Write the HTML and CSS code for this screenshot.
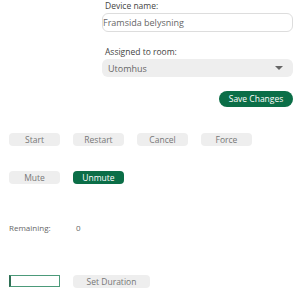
FILE: index.html
```html
<!DOCTYPE html>
<html lang="en">
<head>
  <meta charset="UTF-8">
  <title>Device settings</title>
  <link rel="stylesheet" href="styles.css">
</head>
<body>
  <div class="settings">
    <label class="field-label" for="deviceName">Device name:</label>
    <input type="text" id="deviceName" class="text-input" value="Framsida belysning">

    <label class="field-label room-label" for="room">Assigned to room:</label>
    <div class="select-box" id="room">
      <span>Utomhus</span>
      <span class="arrow"></span>
    </div>

    <div class="save-row">
      <button class="btn btn-green save-btn">Save Changes</button>
    </div>
  </div>

  <div class="btn-row first-row">
    <button class="btn">Start</button>
    <button class="btn">Restart</button>
    <button class="btn">Cancel</button>
    <button class="btn">Force</button>
  </div>

  <div class="btn-row">
    <button class="btn">Mute</button>
    <button class="btn btn-green">Unmute</button>
  </div>

  <div class="remaining">
    <span class="remaining-label">Remaining:</span>
    <span>0</span>
  </div>

  <div class="btn-row duration-row">
    <input type="text" class="duration-input">
    <button class="btn duration-btn">Set Duration</button>
  </div>
</body>
</html>
```

FILE: styles.css
```css
/* Global reset */
* {
  margin: 0;
  padding: 0;
  box-sizing: border-box;
  font-family: 'Open Sans', sans-serif;
}

body {
  background-color: #fff;
  color: #555;
  font-size: 9px;
  width: 300px;
  height: 294px;
  overflow: hidden;
}

/* Top form */
.settings {
  margin-left: 102px;
  width: 191px;
}

.field-label {
  display: block;
  height: 13px;
  line-height: 11px;
  padding-left: 3px;
  color: #444;
  font-size: 8.5px;
}

.room-label {
  height: 27px;
  padding-top: 14px;
  line-height: 12px;
}

.text-input {
  display: block;
  width: 191px;
  height: 19px;
  border: 1px solid #ddd;
  border-radius: 6px;
  padding: 0;
  color: #666;
  font-size: 9px;
  background: #fff;
  outline: none;
}

.select-box {
  display: flex;
  align-items: center;
  justify-content: space-between;
  height: 18px;
  padding: 0 10px 0 6px;
  background-color: #eee;
  border-radius: 6px;
  color: #666;
  font-size: 9px;
}

.arrow {
  width: 0;
  height: 0;
  border-left: 4px solid transparent;
  border-right: 4px solid transparent;
  border-top: 4px solid #666;
}

.save-row {
  display: flex;
  justify-content: flex-end;
  margin-top: 14px;
}

/* Buttons */
.btn {
  width: 51px;
  height: 13px;
  border: none;
  border-radius: 4px;
  background-color: #eee;
  color: #777;
  font-size: 8.5px;
  line-height: 13px;
  cursor: pointer;
}

.btn-green {
  background-color: #0b6e47;
  color: #fff;
}

.save-btn {
  width: 74px;
  height: 16px;
  border-radius: 8px;
  font-size: 8.5px;
  line-height: 16px;
}

.btn-row {
  display: flex;
  gap: 13px;
  margin-left: 9px;
  margin-top: 25px;
}

.first-row {
  margin-top: 26px;
}

.remaining {
  display: flex;
  margin: 38px 0 0 9px;
  font-size: 8px;
  color: #666;
}

.remaining-label {
  width: 67px;
}

.duration-row {
  margin-top: 42px;
}

.duration-input {
  width: 51px;
  height: 12px;
  border: 1px solid #4c9a7a;
  border-left: 2px solid #2f6f55;
  outline: none;
  background: #fff;
}

.duration-btn {
  width: 77px;
  height: 13px;
  font-size: 8.5px;
}
```
